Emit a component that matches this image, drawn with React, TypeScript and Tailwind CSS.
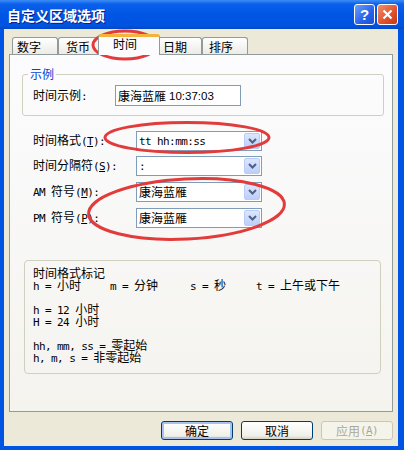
import type { ReactNode } from 'react';

// half-width ascii, like the bitmap font of the dialog
const A = ({ children }: { children: ReactNode }) => (
  <span className="font-['DejaVu_Sans_Mono'] text-[11px] tracking-[-0.6px]">{children}</span>
);

const tabs = [
  { label: '数字', w: 'w-[46px]', pl: 'pl-[4px]' },
  { label: '货币', w: 'w-[42px]', pl: 'pl-[7px]' },
  { label: '时间', w: 'w-[58px]', pl: 'pl-[14px]', active: true },
  { label: '日期', w: 'w-[44px]', pl: 'pl-[4px]' },
  { label: '排序', w: 'w-[46px]', pl: 'pl-[6px]' },
];

function Combo({ children }: { children: ReactNode }) {
  return (
    <div className="w-[126px] h-[20px] border border-[#7F9DB9] bg-white flex items-center justify-between pl-[2px] pr-[1px]">
      <span className="leading-[12px]">{children}</span>
      <div className="w-[16px] h-[16px] rounded-[2px] border border-[#B9CCF8] bg-[linear-gradient(to_bottom,#DCE6FE,#BCCEFA)] flex items-center justify-center">
        <svg width="9" height="6" viewBox="0 0 9 6">
          <path d="M1 1 L4.5 4.5 L8 1" fill="none" stroke="#4D6185" strokeWidth="2" />
        </svg>
      </div>
    </div>
  );
}

function Row({ label, value, className }: { label: ReactNode; value: ReactNode; className?: string }) {
  return (
    <div className={`flex items-center h-[20px] ${className ?? ''}`}>
      <div className="w-[103px]">{label}</div>
      <Combo>{value}</Combo>
    </div>
  );
}

function Button({ children, primary, disabled }: { children: ReactNode; primary?: boolean; disabled?: boolean }) {
  let cls = 'border-[#003C74] bg-[linear-gradient(to_bottom,#FFFFFF,#F0F0EA_80%,#D6D0C5)]';
  if (primary) cls += ' shadow-[inset_0_0_0_2px_#A7C2EE]';
  if (disabled) cls = 'border-[#C9C7BA] bg-[#F5F4EA] text-[#ACA899]';
  return (
    <div className={`w-[72px] h-[19px] rounded-[3px] border flex items-center justify-center ${cls}`}>
      {children}
    </div>
  );
}

export default function App() {
  return (
    <div className="relative w-[404px] h-[450px] bg-[#0054E3] flex flex-col font-['Noto_Sans_CJK_SC',sans-serif] text-[12px] leading-[12px] text-black select-none">
      {/* title bar */}
      <div className="h-[29px] flex items-center pl-[7px] pr-[6px] bg-[linear-gradient(to_bottom,#3D8DF5_0%,#0A60EB_14%,#0055E5_50%,#0053E0_88%,#0048C8_100%)]">
        <span className="flex-1 text-white font-bold text-[14px] leading-[14px] [text-shadow:1px_1px_0_#0A1E8C]">
          自定义区域选项
        </span>
        <div className="flex gap-[2px]">
          <div className="w-[21px] h-[21px] rounded-[3px] border border-white bg-[linear-gradient(135deg,#6CA0FA,#2662EC_60%,#1B4FD6)] flex items-center justify-center text-white font-bold text-[15px] font-['Liberation_Sans']">
            ?
          </div>
          <div className="w-[21px] h-[21px] rounded-[3px] border border-white bg-[linear-gradient(135deg,#F0906C,#E0502A_60%,#C03A18)] flex items-center justify-center">
            <svg width="11" height="11" viewBox="0 0 11 11">
              <path d="M1.5 1.5 L9.5 9.5 M9.5 1.5 L1.5 9.5" stroke="white" strokeWidth="2.2" />
            </svg>
          </div>
        </div>
      </div>

      {/* body */}
      <div className="flex-1 ml-[4px] mr-[6px] mb-[4px] bg-[#ECE9D8] flex flex-col px-[5px] pt-[5px] pb-[6px]">
        <div className="h-[20px] flex items-end pl-[3px]">
          {tabs.map((t) =>
            t.active ? (
              <div
                key={t.label}
                className={`relative z-10 -mx-[2px] -mb-[1px] h-[21px] w-[62px] ${t.pl} pt-[1px] border border-b-0 border-[#919B9C] border-t-[3px] border-t-[#F5B33C] rounded-t-[3px] bg-[#FCFCFE]`}
              >
                {t.label}
              </div>
            ) : (
              <div
                key={t.label}
                className={`h-[17px] ${t.w} ${t.pl} pt-[3px] border border-b-0 border-[#919B9C] rounded-t-[3px] bg-[linear-gradient(to_bottom,#FFFFFF,#ECEBE6)]`}
              >
                {t.label}
              </div>
            )
          )}
        </div>

        <div className="h-[358px] border border-[#919B9C] bg-[linear-gradient(to_bottom,#FCFCFE,#F4F3EE)] flex flex-col pt-[12px]">
          <fieldset className="ml-[12px] w-[362px] border border-[#D0D0BF] rounded-[3px] pl-[5px] pb-[9px]">
            <legend className="px-[2px] h-[14px] leading-[14px] text-[#0046D5]">示例</legend>
            <div className="flex items-center pt-[4px] ml-[5px]">
              <div className="w-[82px]">
                时间示例<A>:</A>
              </div>
              <div className="w-[126px] h-[21px] border border-[#7F9DB9] bg-white pl-[2px] flex items-center">
                康海蓝雁 <span className="font-['Liberation_Sans'] text-[11.5px] ml-[3px]">10:37:03</span>
              </div>
            </div>
          </fieldset>

          <div className="mt-[15px] ml-[23px] flex flex-col">
            <Row
              label={<>时间格式<A>(<u>T</u>):</A></>}
              value={<A>tt hh:mm:ss</A>}
            />
            <Row
              className="mt-[5px]"
              label={<>时间分隔符<A>(<u>S</u>):</A></>}
              value={<A>:</A>}
            />
            <Row
              className="mt-[6px]"
              label={<><A>AM </A>符号<A>(<u>M</u>):</A></>}
              value="康海蓝雁"
            />
            <Row
              className="mt-[6px]"
              label={<><A>PM </A>符号<A>(<u>P</u>):</A></>}
              value="康海蓝雁"
            />
          </div>

          <div className="mt-[32px] ml-[14px] w-[357px] h-[114px] border border-[#D0D0BF] rounded-[4px] pt-[6px] pl-[8px] flex flex-col">
            <div className="h-[12px]">时间格式标记</div>
            <div className="h-[12px] flex">
              <span className="w-[77px]"><A>h = </A>小时</span>
              <span className="w-[80px]"><A>m = </A>分钟</span>
              <span className="w-[66px]"><A>s = </A>秒</span>
              <span><A>t = </A>上午或下午</span>
            </div>
            <div className="h-[12px]" />
            <div className="h-[12px]"><A>h = 12 </A>小时</div>
            <div className="h-[12px]"><A>H = 24 </A>小时</div>
            <div className="h-[12px]" />
            <div className="h-[12px]"><A>hh, mm, ss = </A>零起始</div>
            <div className="h-[12px]"><A>h, m, s = </A>非零起始</div>
          </div>
        </div>

        <div className="mt-[9px] flex justify-end gap-[8px]">
          <Button primary>确定</Button>
          <Button>取消</Button>
          <Button disabled>
            应用<A>(<u>A</u>)</A>
          </Button>
        </div>
      </div>

      {/* red marker annotations drawn over the screenshot */}
      <svg className="absolute inset-0 pointer-events-none" width="404" height="450">
        <g fill="none" stroke="#E23B3B" strokeWidth="3">
          <ellipse cx="125" cy="45" rx="32" ry="14" />
          <ellipse cx="187" cy="137.5" rx="82" ry="15" />
          <ellipse cx="186.5" cy="209" rx="98" ry="30" transform="rotate(-3 186.5 209)" />
        </g>
      </svg>
    </div>
  );
}
